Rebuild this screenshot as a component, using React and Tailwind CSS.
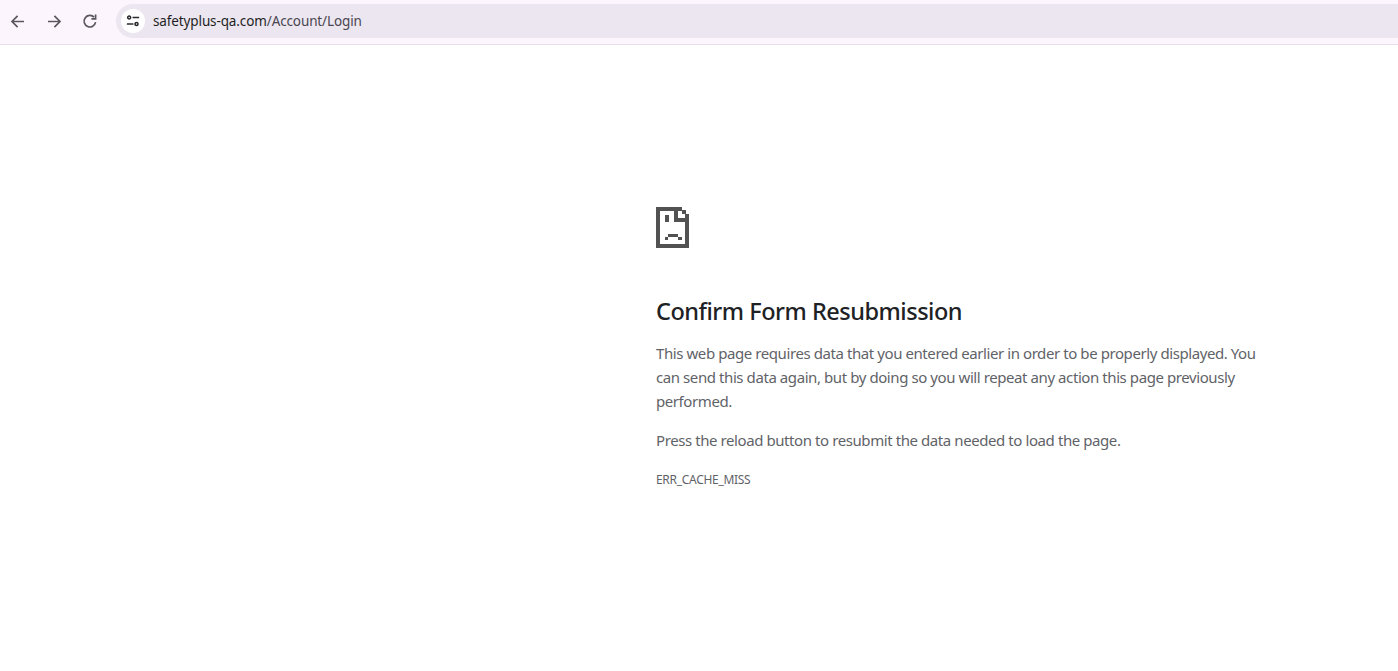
import React from "react";

function Back() {
  return (
    <svg width="20" height="20" viewBox="0 0.5 20 20" fill="none" stroke="#5b5760" strokeWidth="1.7">
      <path d="M16 10H4.5M9.6 4.4 4 10l5.6 5.6" />
    </svg>
  );
}
function Forward() {
  return (
    <svg width="20" height="20" viewBox="0 0.5 20 20" fill="none" stroke="#5b5760" strokeWidth="1.7">
      <path d="M4 10h11.5M10.4 4.4 16 10l-5.6 5.6" />
    </svg>
  );
}
function Reload() {
  return (
    <svg width="20" height="20" viewBox="0 1 20 20" fill="none" stroke="#5b5760" strokeWidth="1.7">
      <path d="M15.6 11.2a5.8 5.8 0 1 1-1.5-5" />
      <path d="M15.6 3.6v4.2h-4.2" />
    </svg>
  );
}
function Tune() {
  return (
    <svg width="14" height="14" viewBox="0 0 16 16" fill="none" stroke="#2a2a2e" strokeWidth="1.8">
      <circle cx="3.6" cy="4" r="1.7" />
      <path d="M7.5 4H15M1 11.5h7.5" />
      <circle cx="12" cy="11.5" r="1.7" />
    </svg>
  );
}
function SadTab() {
  return (
    <svg width="33" height="41" viewBox="0 0 33 41" fill="#525252" shapeRendering="crispEdges">
      <path d="M0 0h26v4H4v33h25V15h4v26H0z" />
      <path d="M18 4h4v7h11v4H18z" />
      <path d="M26 3h4v4h-4zM29 7h4v4h-4z" />
      <path d="M9 8h4v7H9z" />
      <path d="M12 27h10v3H12zM9 30h3v3H9zM22 30h4v3h-4z" />
    </svg>
  );
}

export default function App() {
  return (
    <div className="min-h-[671px] bg-white font-['Noto_Sans',sans-serif]">
      <header className="h-[45px] flex items-start bg-[#fdf5fd] border-b border-[#e6dfe8]">
        <div className="flex items-center h-[44px] pl-2 gap-4">
          <Back />
          <Forward />
          <Reload />
        </div>
        <div className="ml-4 mt-1 flex-1 h-[34px] bg-[#ece6f0] rounded-l-full flex items-center pl-[5px]">
          <span className="w-6 h-6 rounded-full bg-white flex items-center justify-center">
            <Tune />
          </span>
          <span className="ml-2 text-[13.5px] tracking-[-0.12px] text-[#1f1f1f]">
            safetyplus-qa.com<span className="text-[#4a4750]">/Account/Login</span>
          </span>
        </div>
      </header>
      <main className="ml-[656px] w-[604px] pt-[162px]">
        <SadTab />
        <h1 className="mt-[47px] text-[23.5px] leading-[32px] font-medium text-[#202124] tracking-[-0.48px]">Confirm Form Resubmission</h1>
        <p className="mt-[14px] text-[15px] leading-6 text-[#5f6368] tracking-[-0.42px]">
          This web page requires data that you entered earlier in order to be properly displayed. You can send this data again, but by doing so you will repeat any action this page previously performed.
        </p>
        <p className="mt-[15px] text-[15px] leading-6 text-[#5f6368] tracking-[-0.42px]">
          Press the reload button to resubmit the data needed to load the page.
        </p>
        <div className="mt-[20px] text-[12px] leading-4 text-[#5f6368] tracking-[-0.3px]">ERR_CACHE_MISS</div>
      </main>
    </div>
  );
}
